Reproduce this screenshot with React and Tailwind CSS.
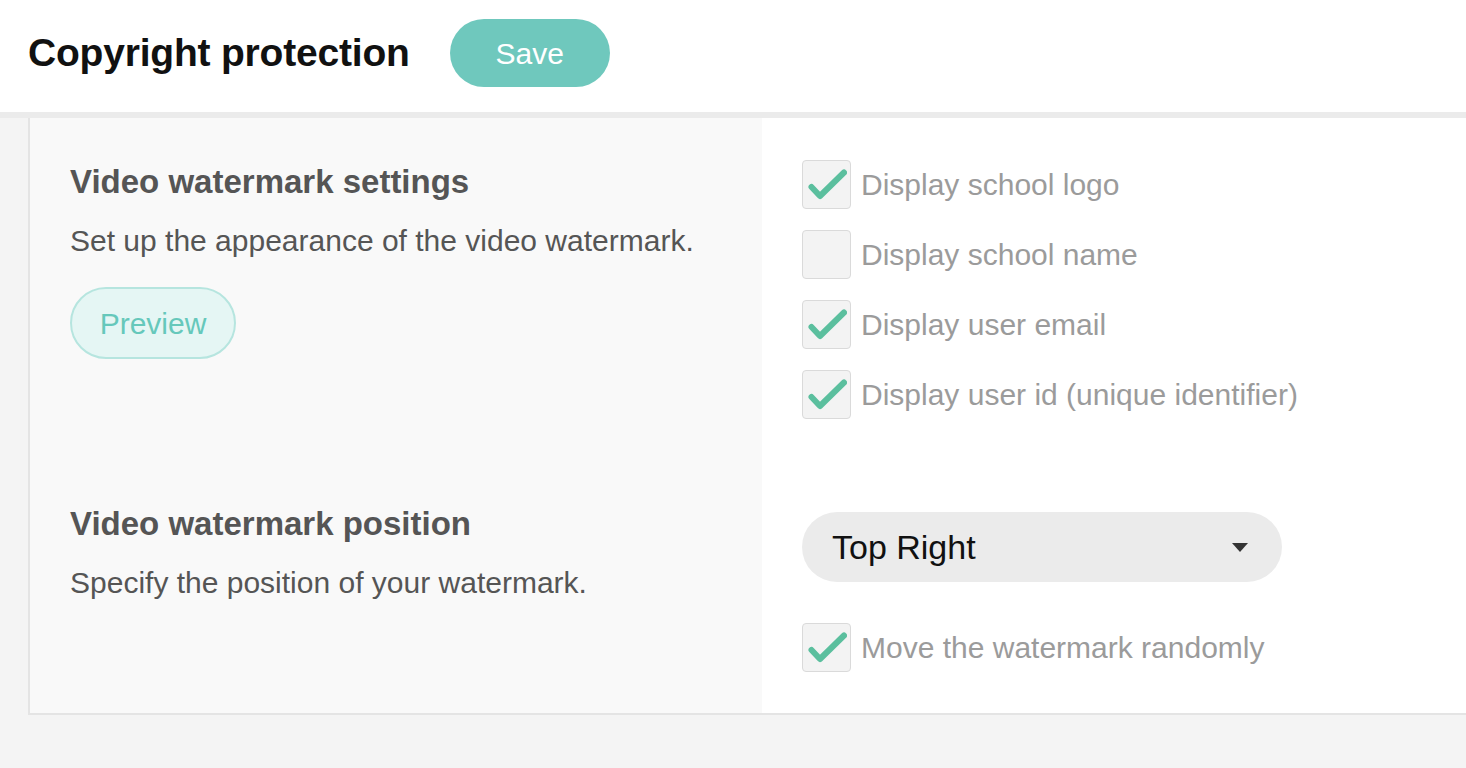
import { useState } from "react";

function Check({ checked, label, onToggle }) {
  return (
    <label className="flex items-center gap-[10px] h-[48px] cursor-pointer" onClick={onToggle}>
      <span className="w-[49px] h-[49px] shrink-0 rounded-[4px] border border-[#dadada] bg-[#f3f3f3] flex items-center justify-center">
        {checked && (
          <svg width="40" height="32" viewBox="0 0 40 32" fill="none">
            <path
              d="M4.5 19 L13 28 L37 4.5"
              stroke="#5bbf9e"
              strokeWidth="6"
              strokeLinecap="round"
              strokeLinejoin="round"
            />
          </svg>
        )}
      </span>
      <span className="pt-[2px] text-[30px] text-[#9b9b9b] leading-none whitespace-nowrap">{label}</span>
    </label>
  );
}

export default function App() {
  const [opts, setOpts] = useState({ logo: true, name: false, email: true, id: true, random: true });
  const toggle = (k) => setOpts((prev) => ({ ...prev, [k]: !prev[k] }));

  return (
    <div className="min-h-screen bg-[#f4f4f4] font-['Liberation_Sans',Arial,sans-serif] overflow-hidden">
      {/* header */}
      <header className="h-[118px] bg-white flex items-center gap-[40px] pl-[28px] pb-[6px] border-b-[6px] border-[#ebebeb]">
        <h1 className="text-[39px] font-bold text-[#111] tracking-[-0.2px]">Copyright protection</h1>
        <button className="w-[160px] h-[68px] rounded-full bg-[#6fc8bd] text-white text-[30px]">Save</button>
      </header>

      {/* card */}
      <div className="ml-[28px] border-l-2 border-b-2 border-[#e4e4e4] bg-white grid grid-cols-[732px_1fr]">
        {/* row 1 */}
        <div className="bg-[#f9f9f9] pl-[40px] pt-[44px]">
          <h2 className="text-[33px] leading-[40px] font-bold text-[#555]">Video watermark settings</h2>
          <p className="mt-[21px] text-[30px] leading-[36px] text-[#555]">Set up the appearance of the video watermark.</p>
          <button className="mt-[28px] w-[166px] h-[72px] rounded-full bg-[#e5f6f4] border-2 border-[#b6e5df] text-[#66c8bb] text-[30px]">
            Preview
          </button>
        </div>
        <div className="pl-[40px] pt-[42px] pb-[52px] flex flex-col gap-[22px]">
          <Check checked={opts.logo} label="Display school logo" onToggle={() => toggle("logo")} />
          <Check checked={opts.name} label="Display school name" onToggle={() => toggle("name")} />
          <Check checked={opts.email} label="Display user email" onToggle={() => toggle("email")} />
          <Check checked={opts.id} label="Display user id (unique identifier)" onToggle={() => toggle("id")} />
        </div>

        {/* row 2 */}
        <div className="bg-[#f9f9f9] pl-[40px] pt-[34px]">
          <h2 className="text-[33px] leading-[40px] font-bold text-[#555]">Video watermark position</h2>
          <p className="mt-[21px] text-[30px] leading-[36px] text-[#555]">Specify the position of your watermark.</p>
        </div>
        <div className="pl-[40px] pt-[42px] pb-[42px]">
          <div className="w-[480px] h-[70px] rounded-full bg-[#ebebeb] flex items-center justify-between pl-[30px] pr-[34px]">
            <span className="text-[34px] text-[#111]">Top Right</span>
            <svg width="16" height="9" viewBox="0 0 16 9">
              <path d="M0 0 H16 L8 9 Z" fill="#333" />
            </svg>
          </div>
          <div className="mt-[41px]">
            <Check checked={opts.random} label="Move the watermark randomly" onToggle={() => toggle("random")} />
          </div>
        </div>
      </div>
    </div>
  );
}
